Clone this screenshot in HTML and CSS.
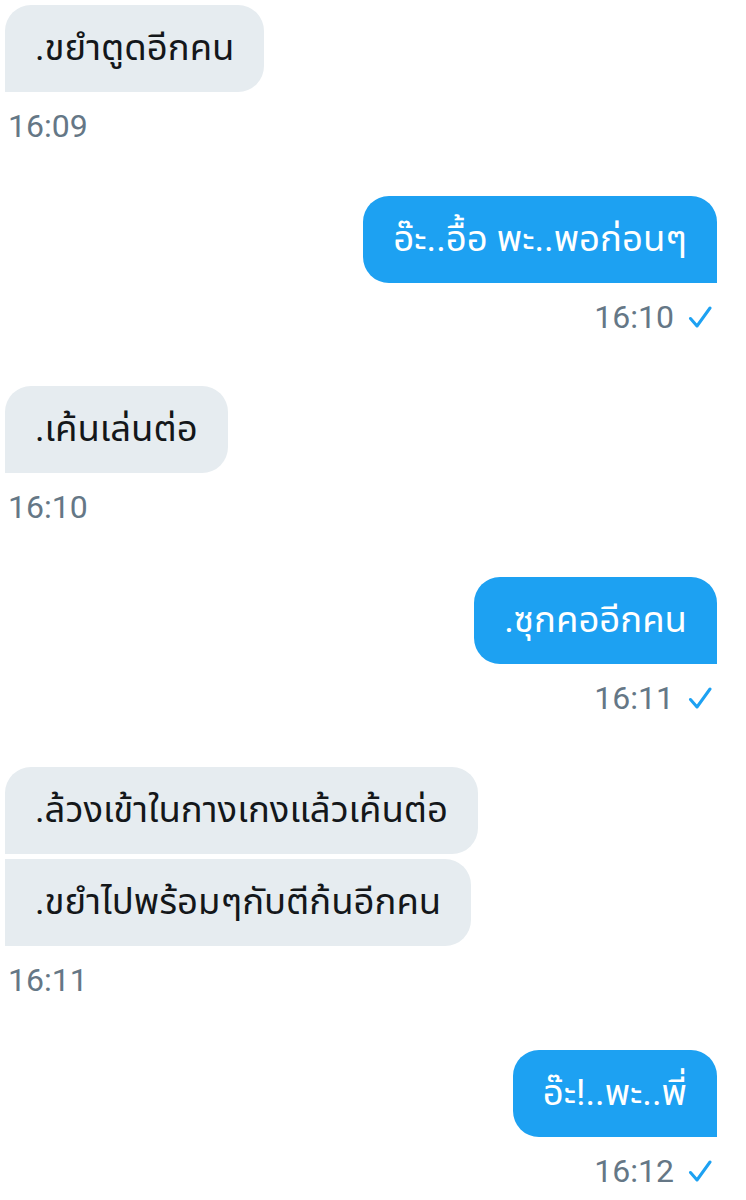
FILE: index.html
```html
<!DOCTYPE html>
<html lang="th">
<head>
<meta charset="utf-8">
<link rel="stylesheet" href="styles.css">
</head>
<body>
<div class="chat">
  <div class="group in">
    <div class="bubble first last">.ขยำตูดอีกคน</div>
    <div class="time">16:09</div>
  </div>
  <div class="group out">
    <div class="bubble first last">อ๊ะ..อื้อ พะ..พอก่อนๆ</div>
    <div class="time">16:10 <svg class="check" viewBox="0 0 24 24" width="24" height="24"><path d="M2.5 13.5L9 21L22 3" fill="none" stroke="#1da1f2" stroke-width="3" stroke-linecap="round" stroke-linejoin="round"/></svg></div>
  </div>
  <div class="group in">
    <div class="bubble first last">.เค้นเล่นต่อ</div>
    <div class="time">16:10</div>
  </div>
  <div class="group out">
    <div class="bubble first last">.ซุกคออีกคน</div>
    <div class="time">16:11 <svg class="check" viewBox="0 0 24 24" width="24" height="24"><path d="M2.5 13.5L9 21L22 3" fill="none" stroke="#1da1f2" stroke-width="3" stroke-linecap="round" stroke-linejoin="round"/></svg></div>
  </div>
  <div class="group in">
    <div class="bubble first">.ล้วงเข้าในกางเกงแล้วเค้นต่อ</div>
    <div class="bubble last">.ขยำไปพร้อมๆกับตีก้นอีกคน</div>
    <div class="time">16:11</div>
  </div>
  <div class="group out">
    <div class="bubble first last">อ๊ะ!..พะ..พี่</div>
    <div class="time">16:12 <svg class="check" viewBox="0 0 24 24" width="24" height="24"><path d="M2.5 13.5L9 21L22 3" fill="none" stroke="#1da1f2" stroke-width="3" stroke-linecap="round" stroke-linejoin="round"/></svg></div>
  </div>
</div>
</body>
</html>
```

FILE: styles.css
```css
html, body {
  margin: 0;
  padding: 0;
  background: #ffffff;
}
body {
  font-family: Roboto, "Noto Sans Thai", "Noto Sans", sans-serif;
  width: 746px;
}
.chat {
  display: flex;
  flex-direction: column;
  gap: 47.5px;
  padding: 5px 29px 0 5px;
}
.group {
  display: flex;
  flex-direction: column;
  gap: 5px;
}
.group.in { align-items: flex-start; }
.group.out { align-items: flex-end; }
.bubble {
  box-sizing: border-box;
  height: 87px;
  padding: 0 30px;
  display: flex;
  align-items: center;
  font-size: 36.5px;
  white-space: nowrap;
  border-radius: 26px;
}
.in .bubble {
  background: #e6ecf0;
  color: #14171a;
}
.out .bubble {
  background: #1da1f2;
  color: #ffffff;
}
.in .bubble.first { border-radius: 26px 26px 26px 0; }
.in .bubble.last { border-radius: 0 26px 26px 0; }
.in .bubble.first.last { border-radius: 26px 26px 26px 0; }
.out .bubble.first.last { border-radius: 26px 26px 0 26px; }
.time {
  margin-top: 7px;
  font-size: 32px;
  line-height: 44px;
  height: 44px;
  color: #657786;
  display: flex;
  align-items: center;
  padding-left: 3px;
}
.out .time {
  padding-left: 0;
  padding-right: 5px;
}
.check {
  margin-left: 14px;
  width: 24px;
  height: 24px;
}
```
